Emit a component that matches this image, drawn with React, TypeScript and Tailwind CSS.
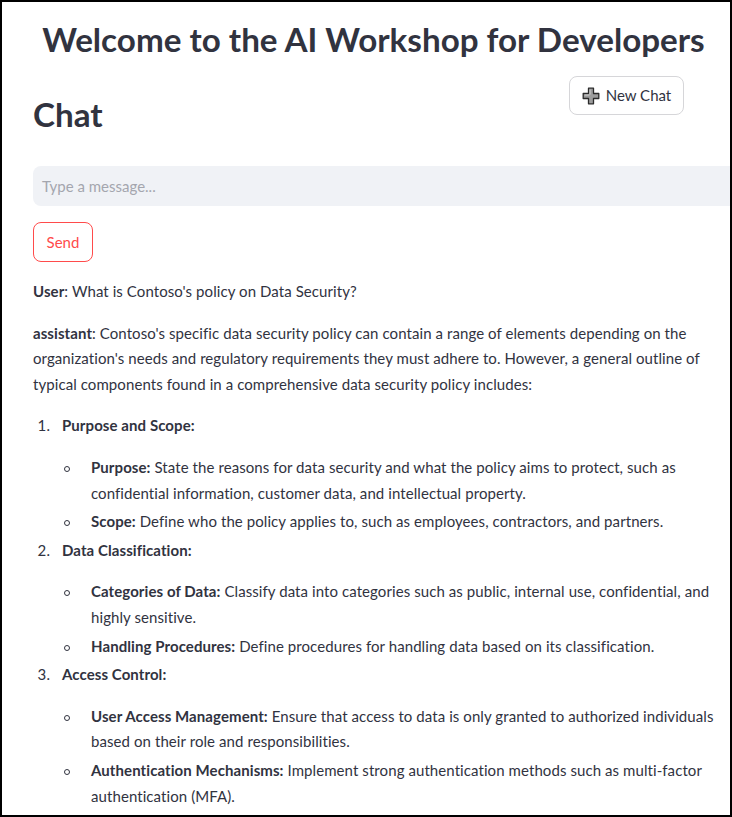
import React from "react";

type Bullet = { label: string; lines: string[] };
type Section = { title: string; bullets: Bullet[] };

const SECTIONS: Section[] = [
  {
    title: "Purpose and Scope:",
    bullets: [
      {
        label: "Purpose:",
        lines: [
          "State the reasons for data security and what the policy aims to protect, such as",
          "confidential information, customer data, and intellectual property.",
        ],
      },
      {
        label: "Scope:",
        lines: ["Define who the policy applies to, such as employees, contractors, and partners."],
      },
    ],
  },
  {
    title: "Data Classification:",
    bullets: [
      {
        label: "Categories of Data:",
        lines: [
          "Classify data into categories such as public, internal use, confidential, and",
          "highly sensitive.",
        ],
      },
      {
        label: "Handling Procedures:",
        lines: ["Define procedures for handling data based on its classification."],
      },
    ],
  },
  {
    title: "Access Control:",
    bullets: [
      {
        label: "User Access Management:",
        lines: [
          "Ensure that access to data is only granted to authorized individuals",
          "based on their role and responsibilities.",
        ],
      },
      {
        label: "Authentication Mechanisms:",
        lines: [
          "Implement strong authentication methods such as multi-factor",
          "authentication (MFA).",
        ],
      },
    ],
  },
];

function PlusIcon() {
  return (
    <svg width="18" height="18" viewBox="0 0 18 18" className="shrink-0">
      <path
        d="M6.5 1.2 H11.5 V6.5 H16.8 V11.5 H11.5 V16.8 H6.5 V11.5 H1.2 V6.5 H6.5 Z"
        fill="#9c9c9c"
        stroke="#2b2b2b"
        strokeWidth="1.3"
        strokeLinejoin="round"
      />
      <path d="M8 2.6 V7.6 M2.6 8 H7.6" stroke="#d0d0d0" strokeWidth="1" />
    </svg>
  );
}

function Lines({ lines }: { lines: string[] }) {
  return (
    <>
      {lines.map((l, i) => (
        <React.Fragment key={i}>
          {i > 0 && <br />}
          {l}
        </React.Fragment>
      ))}
    </>
  );
}

export default function App() {
  return (
    <div className="w-[732px] h-[817px] border-2 border-black overflow-hidden bg-white text-[#31333F] font-['Lato','Noto_Sans',sans-serif]">
      <div className="pl-[31px] pt-[15px]">
        {/* page title */}
        <h1 className="w-[681px] text-center text-[33.2px] leading-[44px] font-bold whitespace-nowrap">
          Welcome to the AI Workshop for Developers
        </h1>

        {/* chat header row */}
        <div className="flex items-start w-[651px] mt-[15px]">
          <h2 className="mt-[16px] text-[33.2px] leading-[44px] font-bold">Chat</h2>
          <button className="ml-auto flex items-center justify-center gap-[6px] w-[115px] h-[39px] rounded-lg border border-[#d6d6d9] bg-white text-[15px]">
            <PlusIcon />
            <span>New Chat</span>
          </button>
        </div>

        {/* message input */}
        <div className="mt-[30px] w-[720px] h-[40px] rounded-l-lg bg-[#F0F2F6] flex items-center pl-[9px]">
          <span className="text-[15px] text-[#a4a6ae]">Type a message...</span>
        </div>

        <button className="mt-[16px] w-[60px] h-[40px] rounded-lg border border-[#ff4b4b] text-[#ff4b4b] text-[15px] bg-white">
          Send
        </button>

        {/* conversation */}
        <div className="mt-[17px] text-[15px] leading-[25.6px] tracking-[0.08px] whitespace-nowrap">
          <p>
            <span className="font-bold">User</span>: What is Contoso's policy on Data Security?
          </p>
          <p className="mt-[16px]">
            <span className="font-bold">assistant</span>: Contoso's specific data security policy can contain a range of elements depending on the
            <br />
            organization's needs and regulatory requirements they must adhere to. However, a general outline of
            <br />
            typical components found in a comprehensive data security policy includes:
          </p>

          <ol className="mt-[16px] flex flex-col gap-[3px]">
            {SECTIONS.map((s, i) => (
              <li key={s.title} className="flex">
                <span className="w-[29px] shrink-0 text-right pr-[12px]">{i + 1}.</span>
                <div>
                  <div className="font-bold">{s.title}</div>
                  <ul className="mt-[16px] flex flex-col gap-[3px]">
                    {s.bullets.map((b) => (
                      <li key={b.label} className="flex">
                        <span className="w-[29px] shrink-0 flex pt-[11px] pl-[2px]">
                          <span className="w-[6px] h-[6px] rounded-full border border-[#31333F]" />
                        </span>
                        <div>
                          <span className="font-bold">{b.label}</span> <Lines lines={b.lines} />
                        </div>
                      </li>
                    ))}
                  </ul>
                </div>
              </li>
            ))}
          </ol>
        </div>
      </div>
    </div>
  );
}
